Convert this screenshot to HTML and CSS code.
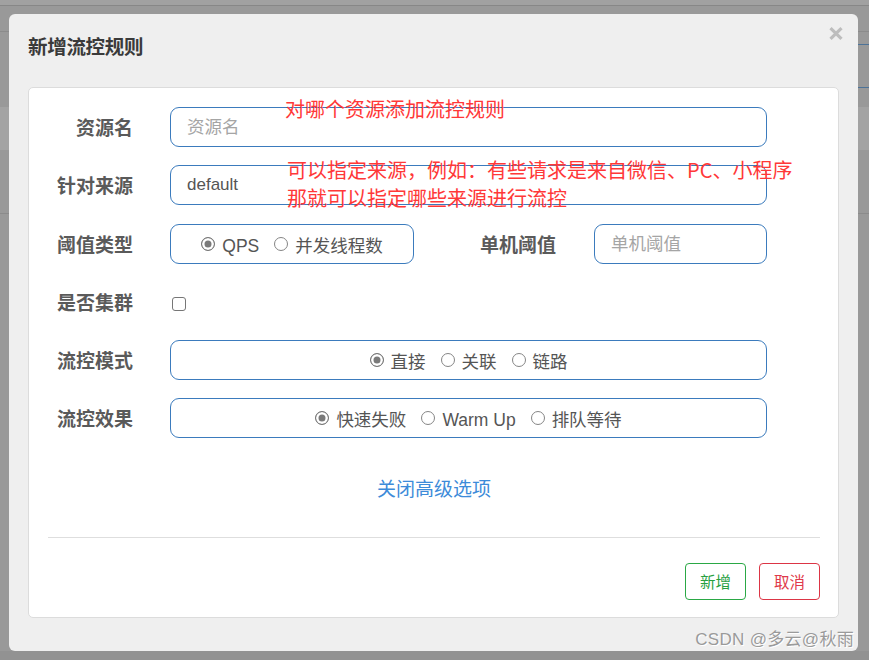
FILE: index.html
```html
<!DOCTYPE html>
<html lang="zh-CN">
<head>
<meta charset="utf-8">
<title>新增流控规则</title>
<link rel="stylesheet" href="styles.css">
</head>
<body>
<div class="modal">
  <div class="modal-header">
    <h4 class="modal-title">新增流控规则</h4>
    <span class="close">
      <svg width="14" height="13" viewBox="0 0 14 13"><path d="M1.5 1.2 L12.5 11.8 M12.5 1.2 L1.5 11.8" stroke="#bdbdbd" stroke-width="3.2" fill="none" stroke-linecap="butt"/></svg>
    </span>
  </div>
  <div class="card">
    <form class="form">
      <div class="row">
        <label class="label">资源名</label>
        <div class="input-box wide"><span class="placeholder">资源名</span></div>
      </div>
      <div class="row">
        <label class="label">针对来源</label>
        <div class="input-box wide"><span class="value">default</span></div>
      </div>
      <div class="row">
        <label class="label">阈值类型</label>
        <div class="input-box radio-box small">
          <span class="radio checked"></span><span class="opt">QPS</span>
          <span class="radio"></span><span class="opt last">并发线程数</span>
        </div>
        <label class="label label2">单机阈值</label>
        <div class="input-box narrow"><span class="placeholder">单机阈值</span></div>
      </div>
      <div class="row">
        <label class="label">是否集群</label>
        <span class="checkbox"></span>
      </div>
      <div class="row">
        <label class="label">流控模式</label>
        <div class="input-box radio-box wide">
          <span class="radio checked"></span><span class="opt">直接</span>
          <span class="radio"></span><span class="opt">关联</span>
          <span class="radio"></span><span class="opt last">链路</span>
        </div>
      </div>
      <div class="row">
        <label class="label">流控效果</label>
        <div class="input-box radio-box wide">
          <span class="radio checked"></span><span class="opt">快速失败</span>
          <span class="radio"></span><span class="opt">Warm Up</span>
          <span class="radio"></span><span class="opt last">排队等待</span>
        </div>
      </div>
      <div class="toggle"><a class="link">关闭高级选项</a></div>
    </form>
    <div class="divider"></div>
    <div class="footer">
      <button class="btn btn-green" type="button">新增</button>
      <button class="btn btn-red" type="button">取消</button>
    </div>
    <div class="note note1">对哪个资源添加流控规则</div>
    <div class="note note2">可以指定来源，例如：有些请求是来自微信、PC、小程序<br>那就可以指定哪些来源进行流控</div>
  </div>
</div>
<div class="watermark">CSDN @多云@秋雨</div>
</body>
</html>
```
FILE: styles.css
```css
html, body {
  margin: 0;
  padding: 0;
}
body {
  width: 869px;
  height: 660px;
  overflow: hidden;
  position: relative;
  font-family: "Liberation Sans", "Noto Sans CJK SC", sans-serif;
  background-color: #999999;
  background-image:
    linear-gradient(#a1a1a1, #a1a1a1),
    linear-gradient(#878787, #878787),
    linear-gradient(#8b8b8b, #8b8b8b),
    linear-gradient(#a3a3a3, #a3a3a3),
    linear-gradient(#8b8b8b, #8b8b8b),
    linear-gradient(#4d7398, #4d7398),
    linear-gradient(#4d7398, #4d7398),
    linear-gradient(#929292, #929292);
  background-size:
    100% 5px,
    100% 1px,
    100% 1px,
    100% 43px,
    100% 1px,
    12px 1px,
    12px 1px,
    100% 9px;
  background-position:
    0 0,
    0 5px,
    0 31px,
    0 107px,
    0 213px,
    right 0 top 44px,
    right 0 top 87px,
    0 651px;
  background-repeat: no-repeat;
}

.modal {
  position: relative;
  margin: 14px 0 0 9px;
  width: 849px;
  height: 637px;
  box-sizing: border-box;
  padding: 0 19px;
  background: #efefef;
  border-radius: 6px;
}

.modal-header {
  padding-top: 21px;
  height: 52px;
}
.modal-title {
  margin: 0;
  font-size: 19.5px;
  line-height: 24px;
  font-weight: bold;
  color: #3a3a3a;
  letter-spacing: -0.3px;
}
.close {
  position: absolute;
  top: 13px;
  right: 15px;
  width: 14px;
  height: 13px;
  display: block;
}
.close svg { display: block; }

.card {
  position: relative;
  box-sizing: border-box;
  width: 811px;
  height: 531px;
  background: #fff;
  border: 1px solid #dcdcdc;
  border-radius: 5px;
  padding: 19px 18px 18px 19px;
}

.row {
  display: flex;
  align-items: center;
  height: 40px;
  margin-bottom: 18.25px;
}
.label {
  width: 85px;
  flex: none;
  text-align: right;
  font-size: 19px;
  line-height: 24px;
  font-weight: bold;
  color: #5a5a5a;
  white-space: nowrap;
  margin-right: 37px;
  position: relative;
  top: 2px;
}
.label2 {
  width: 142px;
  margin-right: 38px;
}

.input-box {
  box-sizing: border-box;
  height: 40px;
  border: 1px solid #3b7bbd;
  border-radius: 9px;
  display: flex;
  align-items: center;
  padding-left: 16px;
  font-size: 17.5px;
  line-height: 22px;
  flex: none;
}
.wide { width: 597px; }
.small { width: 244px; }
.narrow { width: 173px; }
.placeholder { color: #a5a5a5; }
.value { color: #555; font-size: 17px; }

.radio-box {
  justify-content: center;
  padding-left: 0;
  padding-top: 4px;
  font-size: 17.5px;
  color: #555;
}
.radio {
  box-sizing: border-box;
  width: 14px;
  height: 14px;
  border-radius: 50%;
  border: 1px solid #858585;
  background: #fff;
  margin-right: 7px;
  flex: none;
  position: relative;
  top: -2px;
}
.radio.checked {
  background: #7a7a7a;
  border-color: #777;
  box-shadow: inset 0 0 0 2.5px #fff;
}
.opt {
  margin-right: 15px;
  white-space: nowrap;
}
.opt.last { margin-right: 0; }

.checkbox {
  box-sizing: border-box;
  width: 14px;
  height: 14px;
  border: 1px solid #767676;
  border-radius: 3px;
  margin-left: 2px;
  position: relative;
  top: 2px;
  background: #fff;
}

.toggle {
  padding-top: 21px;
  text-align: center;
  width: 772px;
  height: 24px;
}
.link {
  font-size: 19px;
  line-height: 24px;
  color: #3d8bd9;
  text-decoration: none;
}

.divider {
  margin-top: 35px;
  height: 1px;
  background: #dedede;
}

.footer {
  margin-top: 25px;
  display: flex;
  justify-content: flex-end;
  gap: 13px;
}
.btn {
  box-sizing: border-box;
  width: 61px;
  height: 37px;
  background: #fff;
  border-radius: 4px;
  font-family: "Noto Sans CJK SC", sans-serif;
  font-size: 15.5px;
  padding: 0;
  cursor: pointer;
}
.btn-green {
  border: 1px solid #2aa845;
  color: #28a03f;
}
.btn-red {
  border: 1px solid #dc3545;
  color: #e0394a;
}

.note {
  position: absolute;
  color: #ff3838;
  font-size: 20px;
  white-space: nowrap;
  font-family: "Noto Sans CJK SC", sans-serif;
}
.note1 {
  left: 256px;
  top: 8px;
  line-height: 26px;
}
.note2 {
  left: 258px;
  top: 68px;
  line-height: 28px;
}

.watermark {
  position: absolute;
  right: 15px;
  top: 629px;
  font-size: 17px;
  line-height: 22px;
  color: #9a9a9a;
  text-shadow: 1px 1px 0 #fff;
  letter-spacing: 0.3px;
}
```
